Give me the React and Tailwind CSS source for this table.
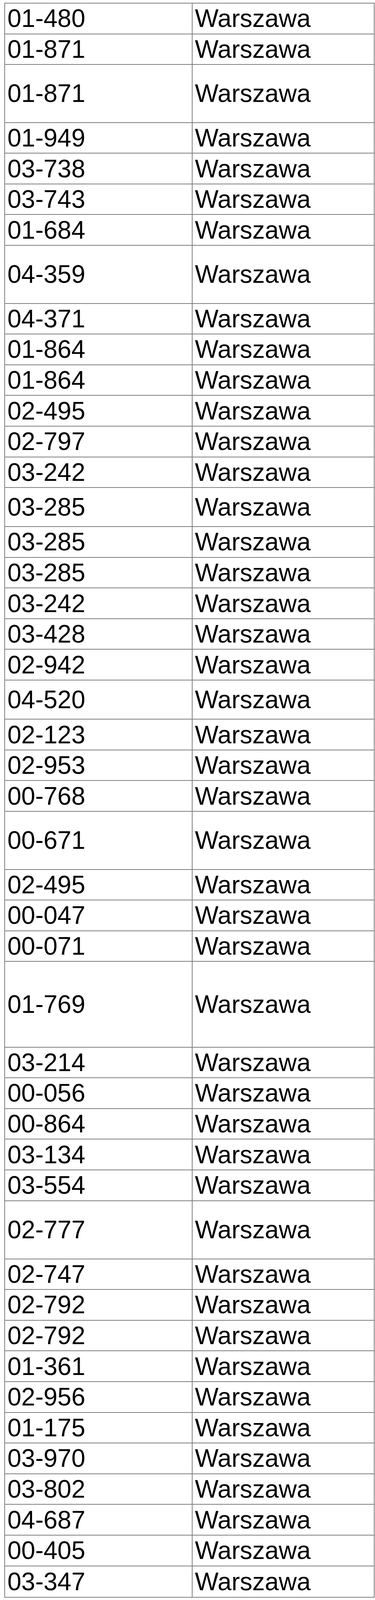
const ROWS = [
  ['01-480'],
  ['01-871'],
  ['01-871', 'h-[148.5px]'],
  ['01-949'],
  ['03-738'],
  ['03-743'],
  ['01-684'],
  ['04-359', 'h-[148.5px]'],
  ['04-371'],
  ['01-864'],
  ['01-864'],
  ['02-495'],
  ['02-797'],
  ['03-242'],
  ['03-285', 'h-[99.9px]'],
  ['03-285'],
  ['03-285'],
  ['03-242'],
  ['03-428'],
  ['02-942'],
  ['04-520', 'h-[100.3px]'],
  ['02-123'],
  ['02-953'],
  ['00-768'],
  ['00-671', 'h-[148.5px]'],
  ['02-495'],
  ['00-047'],
  ['00-071'],
  ['01-769', 'h-[219.2px]'],
  ['03-214'],
  ['00-056'],
  ['00-864'],
  ['03-134'],
  ['03-554'],
  ['02-777', 'h-[149.1px]'],
  ['02-747'],
  ['02-792'],
  ['02-792'],
  ['01-361'],
  ['02-956'],
  ['01-175'],
  ['03-970'],
  ['03-802'],
  ['04-687'],
  ['00-405'],
  ['03-347'],
];

export default function App() {
  return (
    <div className="min-h-screen bg-white pl-[11px] pt-[7px] font-['Liberation_Sans',Arial,sans-serif] text-black">
      <div className="w-[948px] border-2 border-[#7f7f7f]">
        {ROWS.map(([code, h], i) => (
          <div
            key={i}
            className={`grid grid-cols-[480px_1fr] ${h || 'h-[78.6px]'} ${
              i < ROWS.length - 1 ? 'border-b-2 border-[#7f7f7f]' : ''
            }`}
          >
            <div className="flex items-center border-r-2 border-[#7f7f7f] pl-[6px] text-[64px] leading-none">
              {code}
            </div>
            <div className="flex items-center pl-[6px] text-[64px] leading-none">Warszawa</div>
          </div>
        ))}
      </div>
    </div>
  );
}
